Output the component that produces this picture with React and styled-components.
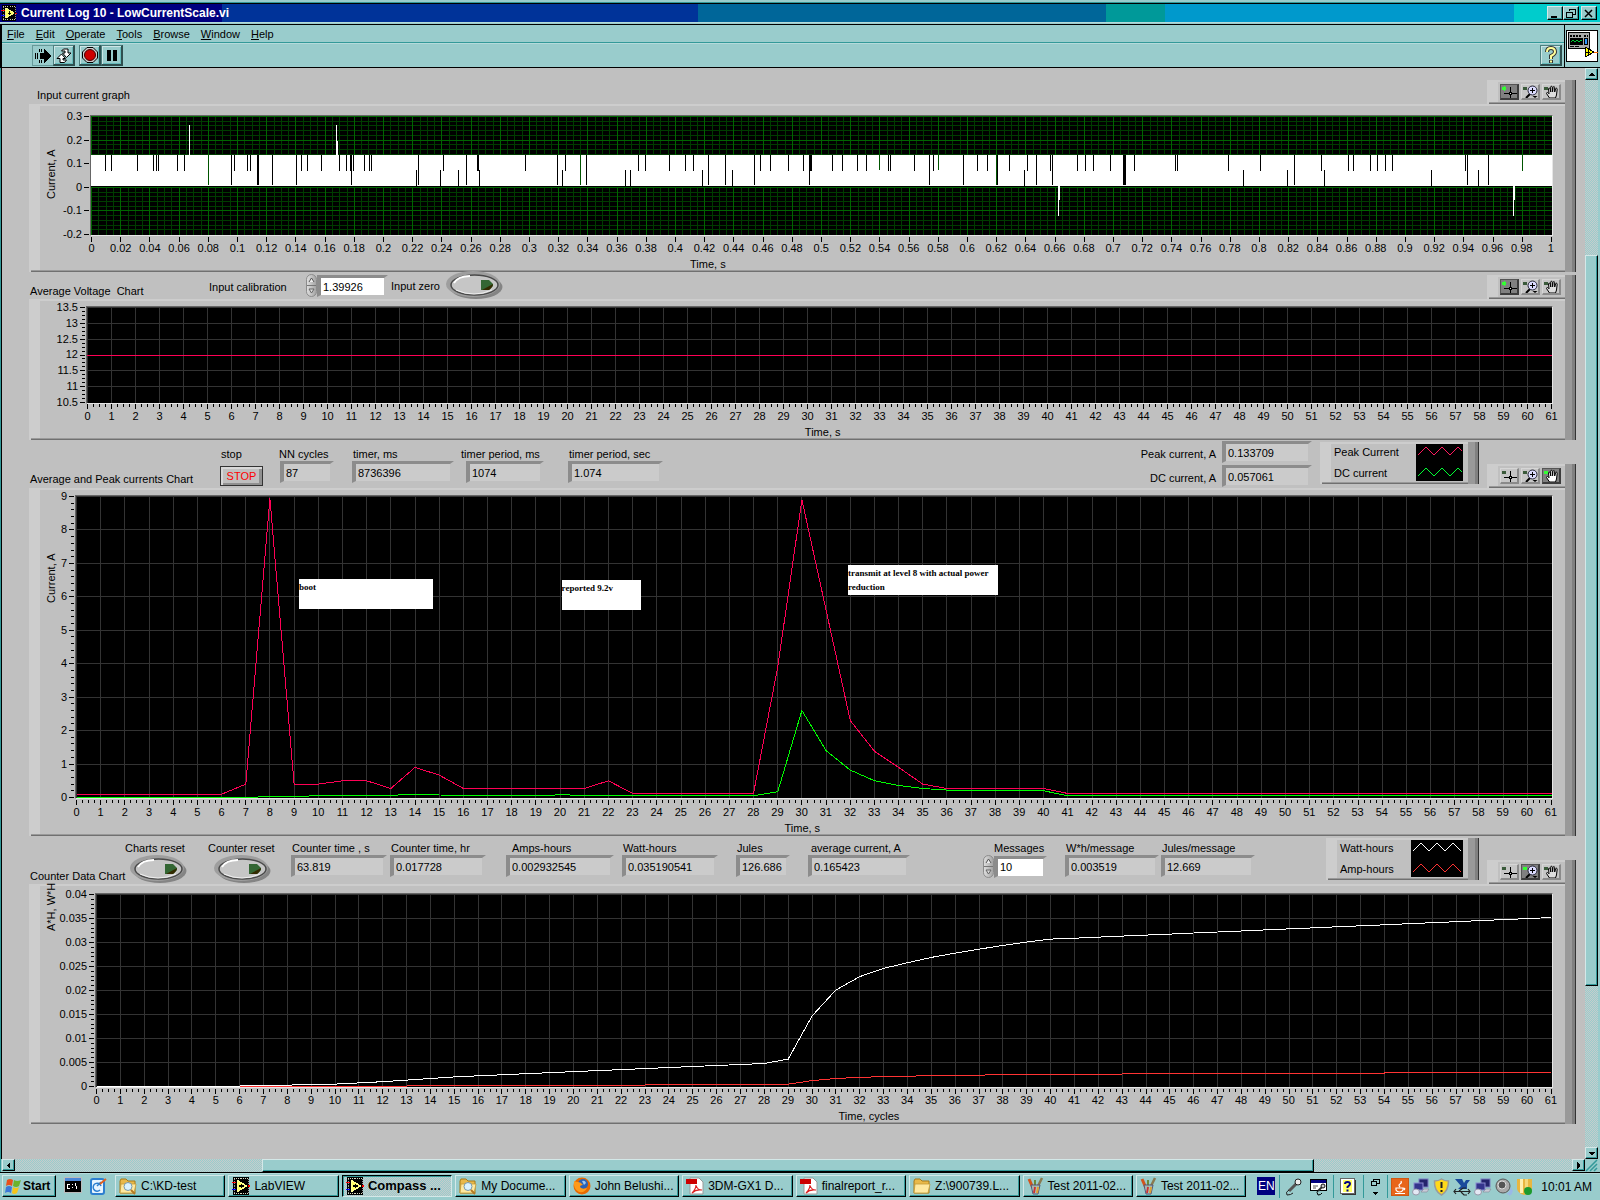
import React from "react";
import styled, { createGlobalStyle, css } from "styled-components";

const C = {
  teal: "#99cccc",
  tealDark: "#339999",
  panel: "#c0c0c0",
  light: "#cdcdcd",
};

const sans = `"Liberation Sans", Arial, sans-serif`;

const Global = createGlobalStyle`
  *, *::before, *::after { box-sizing: border-box; }
  body { margin: 0; background: ${C.teal}; }
  button, input, output { font: inherit; color: inherit; margin: 0; padding: 0; border: 0; background: none; border-radius: 0; }
  svg { display: block; flex: none; }
`;

const Desktop = styled.div`
  display: flex;
  flex-direction: column;
  min-height: 100vh;
  background: ${C.teal};
  color: #000;
  font: 11px/13px ${sans};
`;

/* ---------- window frame ---------- */
const TopEdge = styled.div`
  height: 4px;
  border-top: 2px solid ${C.teal};
  background: linear-gradient(${C.tealDark} 50%, #000 50%);
`;
const TitleBar = styled.header`
  display: flex;
  align-items: center;
  height: 18px;
  padding: 0 3px 0 1px;
  background: linear-gradient(
    to right,
    #000080 0 13.9%,
    #003399 13.9% 43.6%,
    #006699 43.6% 69.1%,
    #009999 69.1% 72.8%,
    #0099cc 72.8% 94.6%,
    #00cccc 94.6%
  );
  color: #fff;
  font: bold 12px/18px ${sans};
`;
const TitleText = styled.h1`
  flex: 1;
  margin: 0 0 0 4px;
  font: inherit;
`;
const raised = css`
  border: 1px solid;
  border-color: #d4e8e8 #000 #000 #d4e8e8;
  box-shadow: inset -1px -1px 0 ${C.tealDark};
  background: ${C.teal};
`;
const CaptionButton = styled.button`
  ${raised}
  display: grid;
  place-items: center;
  width: 16px;
  height: 14px;
  margin-left: ${(p) => (p.$apart ? 2 : 0)}px;
`;
const TitleEdge = styled.div`
  height: 3px;
  background: linear-gradient(#b5dada 0 1px, ${C.teal} 1px 2px, #000 2px 3px);
`;
const Bars = styled.div`
  display: flex;
  height: 43px;
  border-left: 2px solid #000;
  border-bottom: 1px solid #000;
`;
const BarStack = styled.div`
  flex: 1;
  display: flex;
  flex-direction: column;
`;
const MenuBar = styled.nav`
  display: flex;
  align-items: center;
  gap: 11px;
  height: 19px;
  padding: 0 5px;
  border-bottom: 1px solid #b5dada;
  box-shadow: inset 0 -1px 0 ${C.tealDark};
`;
const MenuItem = styled.button`
  &::first-letter { text-decoration: underline; }
`;
const ToolBar = styled.div`
  display: flex;
  flex: 1;
  align-items: center;
  padding: 0 2px 0 30px;
`;
const ToolButton = styled.button`
  display: grid;
  place-items: center;
  width: ${(p) => (p.$flat ? 21 : 22)}px;
  height: 21px;
  margin-left: ${(p) => p.$gap || 0}px;
  border: 1px solid #669999;
  border-right-width: 0;
  ${(p) =>
    !p.$flat &&
    css`
      border: 1px solid #336666;
      border-width: 1px 2px 2px 1px;
      border-color: #4d8080 #2f4f4f #2f4f4f #4d8080;
      box-shadow: inset 1px 1px 0 #cce6e6, inset -1px -1px 0 #66bbbb;
    `}
`;
const Grow = styled.div`
  flex: 1;
`;
const ViIcon = styled.div`
  width: 36px;
  padding: 5px 1px 0;
  border-left: 1px solid #000;
`;

/* ---------- scrolling work area ---------- */
const WorkRow = styled.div`
  display: flex;
  flex: 1;
  border-left: 1px solid ${C.tealDark};
  border-right: 2px solid ${C.teal};
`;
const Front = styled.main`
  flex: 1;
  min-width: 0;
  padding: 0 9px 35px 27px;
  border-left: 1px solid #000;
  background: ${C.panel};
`;
const checker = css`
  background: repeating-conic-gradient(#c6cccc 0 25%, ${C.teal} 0 50%) 0 0 / 2px 2px;
`;
const VBar = styled.div`
  display: flex;
  flex-direction: column;
  width: 13px;
`;
const HBar = styled.div`
  display: flex;
  height: 13px;
  padding: 0 2px 0 1px;
  border-left: 1px solid ${C.tealDark};
`;
const Track = styled.div`
  ${checker}
  flex: ${(p) => p.$part} 1 0;
`;
const Thumb = styled.div`
  ${raised}
  flex: ${(p) => p.$part} 1 0;
`;
const ScrollButton = styled.button`
  ${raised}
  display: grid;
  place-items: center;
  width: 13px;
  height: 12px;
`;

/* ---------- front panel rows ---------- */
const Row = styled.div`
  display: flex;
  align-items: flex-end;
  height: ${(p) => p.$h}px;
  padding-left: ${(p) => p.$left || 1}px;
  white-space: nowrap;
`;
const ChartName = styled.h2`
  width: ${(p) => p.$w}px;
  margin: 0 0 ${(p) => p.$drop}px;
  font: inherit;
  white-space: pre;
`;
const Slot = styled.div`
  width: ${(p) => p.$w}px;
  margin-bottom: ${(p) => p.$drop}px;
`;
const Caption = styled.label`
  display: block;
  padding-left: ${(p) => p.$in || 1}px;
`;
const Indent = styled.div`
  padding-left: ${(p) => p.$in || 0}px;
`;
const FieldBox = styled.input`
  display: block;
  width: ${(p) => p.$w}px;
  height: 22px;
  padding: 0 0 0 2px;
  border: solid transparent;
  border-width: 3px 4px 2px 4px;
  border-top-color: #8c8c8c;
  border-left-color: #8c8c8c;
  background: ${(p) => (p.$white ? "#fff" : "#cbcbcb")};
  background-clip: padding-box;
  font: 11px/16px ${sans};
`;
const StopButton = styled.button`
  width: 43px;
  height: 20px;
  margin-top: 5px;
  border: 1px solid #333;
  box-shadow: inset 2px 2px 0 #d8d8d8, inset -3px -2px 0 #909090;
  color: #f00;
  font: 11px/18px ${sans};
`;
const Spin = styled.div`
  display: flex;
  flex-direction: column;
  width: 11px;
  height: 23px;
  overflow: hidden;
  border: 1px solid #8c8c8c;
  border-radius: 6px;
  background: linear-gradient(to right, #ddd, #a4a4a4);
`;
const SpinButton = styled.button`
  display: grid;
  flex: 1;
  place-items: center;
  & + & { border-top: 1px solid #777; }
`;
const SwitchButton = styled.button`
  display: block;
  width: 57px;
  height: 28px;
`;
const SideRow = styled.div`
  display: flex;
  align-items: center;
`;
const Readouts = styled.div`
  display: grid;
  grid-template-columns: auto auto;
  gap: 2px 6px;
  justify-items: end;
  margin: 0 8px 1px 0;
`;
const ReadoutName = styled.label`
  padding-top: 7px;
`;

/* a raised plate: pale left and top, thick grey right side */
const plate = css`
  background:
    linear-gradient(to right, #999 0 7px, #808080 7px 10px, #333 10px 11px) right top / 11px 100% no-repeat,
    linear-gradient(#999 50%, #707070 50%) 2px bottom / 100% 2px no-repeat,
    linear-gradient(${C.light}, ${C.light}) left top / 11px 100% no-repeat,
    linear-gradient(${C.light}, ${C.light}) left top / 100% 2px no-repeat,
    ${C.panel};
`;
const Palette = styled.div`
  ${plate}
  display: flex;
  gap: 2px;
  width: 89px;
  height: 24px;
  padding: 4px 0 0 13px;
`;
const PaletteButton = styled.button`
  width: 19px;
  height: 16px;
  border: 1px solid;
  border-width: 1px 2px 2px 1px;
  border-color: ${(p) => (p.$on ? "#555 #3c3c3c #3c3c3c #555" : "#d6d6d6 #8a8a8a #8a8a8a #d6d6d6")};
  background: ${(p) => (p.$on ? "#808080" : "#c6c6c6")};
`;
const LegendPlate = styled.div`
  ${plate}
  display: flex;
  justify-content: space-between;
  width: ${(p) => p.$w}px;
  height: 42px;
  margin: 0 8px 4px 0;
  padding: 2px 16px 2px 14px;
`;
const LegendNames = styled.div`
  display: grid;
  align-content: start;
  gap: 8px;
  padding-top: 2px;
`;

/* ---------- charts ---------- */
const ChartPlate = styled.section`
  ${plate}
  display: grid;
  grid-template-columns: 19px ${(p) => p.$axis}px minmax(0, 1fr) 12px;
  padding: ${(p) => p.$top}px 11px 1px 11px;
`;
const AxisName = styled.div`
  height: ${(p) => p.$tall || 60}px;
  margin: ${(p) => p.$down}px 0 0 5px;
  writing-mode: vertical-rl;
  transform: rotate(180deg);
  white-space: nowrap;
`;
const YAxis = styled.div`
  display: flex;
  justify-content: flex-end;
  gap: 2px;
  padding: 1px 1px 1px 0;
  height: ${(p) => p.$h}px;
`;
const YNames = styled.div`
  display: flex;
  flex-direction: column;
  justify-content: space-between;
  align-items: flex-end;
`;
const YName = styled.span`
  display: flex;
  align-items: center;
  height: 1px;
`;
const Plot = styled.div`
  position: relative;
  height: ${(p) => p.$h}px;
  border: 1px solid;
  border-color: #666 #e6e6e6 #e6e6e6 #666;
  background: #000;
`;
const XAxis = styled.div`
  grid-column: 3;
  padding: ${(p) => p.$gap}px 1px 0 1px;
`;
const XNames = styled.div`
  display: flex;
  justify-content: space-between;
  padding-top: ${(p) => p.$gap}px;
`;
const XName = styled.span`
  display: flex;
  justify-content: center;
  width: 1px;
`;
const XTitle = styled.div`
  margin: 3px 0 0 ${(p) => p.$at}%;
`;
const Note = styled.div`
  position: absolute;
  left: ${(p) => p.$x}%;
  top: ${(p) => p.$y}px;
  width: ${(p) => p.$w}px;
  height: 30px;
  padding-top: 1px;
  background: #fff;
  font: bold 9px/14px "Liberation Serif", serif;
`;

const range = (n) => Array.from({ length: n }, (_, i) => i);

const Drawing = ({ w, h, children, label }) => (
  <svg
    width="100%"
    height={h}
    viewBox={`0 0 ${w} ${h}`}
    preserveAspectRatio="none"
    shapeRendering="crispEdges"
    role={label ? "img" : undefined}
    aria-label={label}
  >
    {children}
  </svg>
);

function Chart({ label, axis, top, w, h, yNames, yMinor = 1, xNames, xMinor = 1, tickGap, nameGap = 0, xTitle, titleAt, yTitle, yDown = 0, yTall, children, notes }) {
  const xs = (xNames.length - 1) * xMinor;
  const ys = (yNames.length - 1) * yMinor;
  return (
    <ChartPlate $axis={axis} $top={top}>
      <AxisName $down={yDown} $tall={yTall}>{yTitle}</AxisName>
      <YAxis $h={h + 2}>
        <YNames>
          {yNames.map((n) => <YName key={n}>{n}</YName>)}
        </YNames>
        <svg width="5" height={h} shapeRendering="crispEdges">
          {range(ys + 1).map((i) => (
            <rect key={i} x={i % yMinor ? 2 : 0} y={Math.round((i * (h - 1)) / ys)} width="5" height="1" />
          ))}
        </svg>
      </YAxis>
      <Plot $h={h + 2}>
        <Drawing w={w} h={h} label={label}>{children}</Drawing>
        {notes}
      </Plot>
      <XAxis $gap={tickGap}>
        <Drawing w={w} h={5}>
          {range(xs + 1).map((i) => (
            <rect key={i} x={Math.round((i * (w - 1)) / xs)} y="0" width="1" height={i % xMinor ? 3 : 5} />
          ))}
        </Drawing>
        <XNames $gap={nameGap}>
          {xNames.map((n) => <XName key={n}>{n}</XName>)}
        </XNames>
        <XTitle $at={titleAt}>{xTitle}</XTitle>
      </XAxis>
    </ChartPlate>
  );
}

const Grid = ({ w, h, nx, ny, color }) => (
  <g fill={color}>
    {range(nx).map((i) => <rect key={`x${i}`} x={Math.round((i * (w - 1)) / nx)} y="0" width="1" height={h} />)}
    {range(ny).map((i) => <rect key={`y${i}`} x="0" y={Math.round((i * (h - 1)) / ny)} width={w} height="1" />)}
  </g>
);

const Trace = ({ w, h, max, data, color }) => (
  <polyline
    fill="none"
    stroke={color}
    strokeWidth="1"
    points={data.map((v, i) => `${(0.5 + (i * (w - 1)) / 61).toFixed(1)},${(h - 0.5 - (v / max) * (h - 1)).toFixed(1)}`).join(" ")}
  />
);

/* dropouts in the sampled current, in plot pixels from the left edge */
const shift = (list) => list.map((x) => x - 91);
const upperGaps = shift([105, 111, 137, 153, 156, 158, 177, 184, 234, 247, 250, 301, 307, 321, 339, 346, 350, 353, 364, 369, 371, 443, 477, 478, 525, 565, 638, 645, 669, 685, 693, 760, 770, 788, 803, 810, 811, 832, 842, 857, 866, 888, 890, 914, 933, 977, 987, 1009, 1027, 1050, 1077, 1085, 1093, 1110, 1134, 1175, 1177, 1228, 1260, 1321, 1348, 1353, 1370, 1377, 1385, 1392, 1465]);
const fullGaps = shift([231, 257, 258, 272, 296, 351, 418, 466, 557, 586, 708, 725, 754, 809, 929, 963, 997, 1036, 1052, 1123, 1124, 1125, 1294, 1467, 1488]);
const lowerGaps = shift([416, 440, 458, 479, 562, 625, 630, 702, 732, 1024, 1243, 1287, 1324, 1431, 1478]);

const fill = (pairs) => {
  const out = [];
  pairs.forEach(([x, v], k) => {
    if (k === 0) return out.push(v);
    const [px, pv] = pairs[k - 1];
    for (let i = px + 1; i <= x; i++) out.push(pv + ((v - pv) * (i - px)) / (x - px));
  });
  return out;
};
const peak = fill([[0, 0.1], [6, 0.1], [7, 0.4], [8, 8.95], [9, 0.4], [10, 0.4], [11, 0.5], [12, 0.5], [13, 0.27], [14, 0.9], [15, 0.67], [16, 0.27], [21, 0.27], [22, 0.5], [23, 0.12], [28, 0.12], [29, 3.9], [30, 8.9], [31, 5.6], [32, 2.3], [33, 1.38], [34, 0.9], [35, 0.4], [36, 0.27], [40, 0.27], [41, 0.12], [61, 0.12]]);
const dc = fill([[0, 0], [7, 0], [8, 0.03], [14, 0.08], [19, 0.05], [20, 0.08], [22, 0.05], [28, 0.05], [29, 0.17], [30, 2.6], [31, 1.4], [32, 0.82], [33, 0.5], [34, 0.36], [35, 0.27], [36, 0.22], [40, 0.2], [41, 0.05], [61, 0.05]]);
const watt = fill([[0, 0.0001], [6, 0.0001], [8, 0.0003], [10, 0.0005], [12, 0.001], [15, 0.002], [20, 0.0031], [28, 0.0048], [29, 0.0057], [30, 0.0147], [31, 0.0201], [32, 0.0229], [33, 0.0246], [34, 0.0258], [35, 0.0269], [36, 0.0278], [37, 0.0286], [38, 0.0294], [39, 0.0301], [40, 0.0307], [41, 0.0309], [61, 0.0352]]);
const amp = watt.map((v) => v / 12);

const sixtyOne = range(62).map(String);
const hundredths = range(51).map((i) => String(i / 50));

/* ---------- icons ---------- */
const LabViewIcon = ({ size = 17 }) => (
  <svg width={size} height={size} viewBox="0 0 17 17" shapeRendering="crispEdges">
    <rect x="1" width="15" height="17" fill="#000" />
    <path d="M2 1.5h14M2 15.5h14" stroke="#d8d8c0" strokeDasharray="1 1" />
    <path d="M2.5 2v13M15.5 2v13" stroke="#999" strokeDasharray="1 1" />
    <path d="M5 3l9 5.5-9 5.5z" fill="#ffff66" stroke="#ffff99" />
    <path d="M7 8.5h4M9 6.5v4" stroke="#000" />
    <path d="M0 5.5h4M15 8.5h2" stroke="#f00" />
    <path d="M0 11.5h4" stroke="#00f" />
  </svg>
);
const CrossIcon = ({ on }) => (
  <svg width="16" height="13" viewBox="0 0 16 13" shapeRendering="crispEdges">
    <rect x="1" y="2" width="4" height="3" fill={on ? "#3f3" : "#3a5a3a"} />
    {on && <path d="M3.500 1v5" stroke="#3f3" />}
    <path d="M3 8.500h13M9.500 2v11" stroke="#000" />
    <rect x="8.500" y="7.500" width="2" height="2" fill="#ddd" stroke="#000" />
  </svg>
);
const LensIcon = ({ on }) => (
  <svg width="16" height="13" viewBox="0 0 16 13">
    <rect x="1" y="2" width="4" height="3" fill={on ? "#3f3" : "#3a5a3a"} />
    <path d="M8 9l-4 4" stroke="#000" strokeWidth="2" />
    <circle cx="10.500" cy="5.500" r="4.500" fill="#dcdcff" stroke="#223" />
    <path d="M8 5.500h5M10.500 3v5" stroke="#000" />
    <path d="M10.500 11h5l-2.500 2z" fill="#000" />
  </svg>
);
const HandIcon = ({ on }) => (
  <svg width="16" height="13" viewBox="0 0 16 13">
    <rect x="1" y="2" width="4" height="3" fill={on ? "#3f3" : "#3a5a3a"} />
    <path d="M6.500 13L3.500 8.500c0-1.500 1.500-1.200 2.500.3L5.500 4c0-1.200 1.500-1.200 1.700 0l.6 3-.2-4.800c0-1.200 1.700-1.200 1.700 0l.3 4.600.4-4.500c.2-1 1.600-1 1.600.1L11.700 7l.9-3.200c.3-1 1.600-.7 1.600.3L13.500 10l-1 3z" fill={on ? "#fff" : "#ddd"} stroke="#000" />
  </svg>
);
const Tools = ({ active }) => (
  <Palette role="group" aria-label="Graph palette">
    <PaletteButton $on={active === 0} aria-label="Cursor"><CrossIcon on={active === 0} /></PaletteButton>
    <PaletteButton $on={active === 1} aria-label="Zoom"><LensIcon on={active === 1} /></PaletteButton>
    <PaletteButton $on={active === 2} aria-label="Pan"><HandIcon on={active === 2} /></PaletteButton>
  </Palette>
);
const Zigzags = ({ w, a, b }) => (
  <svg width={w} height="37" viewBox={`0 0 ${w} 37`} shapeRendering="crispEdges">
    <rect width={w} height="37" fill="#000" />
    <path d={`M2 11l8-8 8 8 8-8 8 8 8-8 ${w > 50 ? "8 8" : "4 4"}`} fill="none" stroke={a} />
    <path d={`M2 32l8-8 8 8 8-8 8 8 8-8 ${w > 50 ? "8 8" : "4 4"}`} fill="none" stroke={b} />
  </svg>
);
const Legend = ({ w, swatch, names, colors }) => (
  <LegendPlate $w={w}>
    <LegendNames>{names.map((n) => <span key={n}>{n}</span>)}</LegendNames>
    <Zigzags w={swatch} a={colors[0]} b={colors[1]} />
  </LegendPlate>
);
const Switch = ({ id }) => (
  <SwitchButton id={id} aria-pressed="false">
    <svg width="57" height="28" viewBox="0 0 57 28">
      <ellipse cx="30" cy="16" rx="26.500" ry="12" fill="#848484" />
      <ellipse cx="27" cy="13" rx="27" ry="13" fill="#9e9e9e" />
      <ellipse cx="28.500" cy="14" rx="23.500" ry="10" fill="#c6c6c6" stroke="#4a4a4a" strokeWidth="1.500" />
      <path d="M8 12q4-7 16-7" fill="none" stroke="#fff" strokeWidth="2" />
      <path d="M10 19q18 8 36 0" fill="none" stroke="#eee" />
      <path d="M35 9h8l4 4v2l-4 4h-8z" fill="#336633" />
      <path d="M36 19l11-6q0 3-4 6z" fill="#332b00" />
    </svg>
  </SwitchButton>
);
const Spinner = () => (
  <Spin>
    <SpinButton aria-label="Increase"><svg width="7" height="6"><path d="M1 5l2.500-4 2.500 4" fill="#eee" stroke="#555" /></svg></SpinButton>
    <SpinButton aria-label="Decrease"><svg width="7" height="6"><path d="M1 1h5L3.500 5z" fill="#ddd" stroke="#666" /></svg></SpinButton>
  </Spin>
);
const Arrow = ({ d }) => <svg width="7" height="7" viewBox="0 0 7 7" shapeRendering="crispEdges"><path d={d} /></svg>;

const Readout = ({ id, name, value, w, slot, lead, indent, drop }) => (
  <Slot $w={slot} $drop={drop}>
    <Caption htmlFor={id} $in={lead}>{name}</Caption>
    <Indent $in={indent}><FieldBox id={id} $w={w} defaultValue={value} readOnly /></Indent>
  </Slot>
);

/* ---------- taskbar ---------- */
const TaskBar = styled.footer`
  display: flex;
  align-items: flex-start;
  height: 28px;
  padding: 2px 2px 0;
  border-top: 1px solid #000;
  box-shadow: inset 0 1px 0 #b5dada;
  font: 12px/20px ${sans};
  white-space: nowrap;
`;
const StartButton = styled.button`
  ${raised}
  display: flex;
  align-items: center;
  gap: 1px;
  width: 54px;
  height: 22px;
  padding-left: 1px;
  font: bold 12px/20px ${sans};
`;
const Launch = styled.div`
  display: flex;
  gap: 7px;
  width: 59px;
  padding: 2px 0 0 8px;
`;
const Tasks = styled.div`
  display: flex;
  flex: 1;
  gap: 3px;
  min-width: 0;
  margin-right: 11px;
`;
const Task = styled.button`
  ${raised}
  display: flex;
  flex: 1 1 0;
  align-items: center;
  gap: 4px;
  min-width: 0;
  height: 22px;
  padding-left: 3px;
  ${(p) =>
    p.$on &&
    css`
      ${checker}
      border-color: #000 #d4e8e8 #d4e8e8 #000;
      box-shadow: inset 1px 1px 0 ${C.tealDark};
      font: bold 13px/20px ${sans};
    `}
`;
const Lang = styled.span`
  width: 18px;
  height: 18px;
  margin: 2px 4px 0 0;
  background: #000080;
  color: #fff;
  line-height: 18px;
  text-align: center;
`;
const TrayGroup = styled.div`
  display: flex;
  align-items: center;
  gap: ${(p) => p.$gap || 0}px;
  height: 23px;
  padding: 0 ${(p) => p.$pad}px;
  border-left: 1px solid ${C.tealDark};
`;
const Clock = styled.time`
  margin: 0 3px 0 5px;
`;

const FolderIcon = ({ find }) => (
  <svg width="18" height="17" viewBox="0 0 18 17">
    <path d="M1 3l1-2h5l2 2h7v12H1z" fill="#e9b949" stroke="#a77b1a" />
    <path d="M2 6h15l-2 9H1z" fill="#ffe9a0" stroke="#c39a35" strokeWidth=".8" />
    {find && <><circle cx="9" cy="8.500" r="4" fill="#d9f3ff" stroke="#7a98a8" /><path d="M12 12l4 4" stroke="#b37a22" strokeWidth="2" /></>}
  </svg>
);
const FoxIcon = () => (
  <svg width="18" height="18" viewBox="0 0 18 18">
    <circle cx="9" cy="9" r="8.500" fill="#e66a00" />
    <circle cx="10" cy="7" r="5" fill="#2a62b8" />
    <path d="M1 4q2 1 4 1 3 0 5 3-3 0-3 2 2 3 7 1-2 5-8 4-6-3-5-11z" fill="#ff9a1a" />
    <path d="M9 4q3-1 4 2l-2 2z" fill="#9cc8f0" />
  </svg>
);
const PdfIcon = () => (
  <svg width="18" height="18" viewBox="0 0 18 18">
    <path d="M4 1h9l4 4v12H4z" fill="#fff" stroke="#999" />
    <path d="M0 2h11v5H0z" fill="#cc0000" />
    <path d="M6 16q4-4 4-8 1 5 6 5-6-1-10 3z" fill="none" stroke="#d22" strokeWidth="1.200" />
  </svg>
);
const BrushIcon = () => (
  <svg width="17" height="18" viewBox="0 0 17 18">
    <path d="M6 11L2 2" stroke="#d2541c" strokeWidth="3" />
    <path d="M8 11V3" stroke="#6a8a3a" strokeWidth="2" />
    <path d="M10 11l5-10" stroke="#8a7a50" strokeWidth="2.500" />
    <path d="M4 8h9l-2 9H6z" fill="#a9cccc" fillOpacity=".8" stroke="#557" />
    <path d="M7 16l1-6" stroke="#c33" strokeWidth="2" />
    <path d="M10 16l1-6" stroke="#e0a030" strokeWidth="2" />
  </svg>
);
const FlagIcon = () => (
  <svg width="18" height="17" viewBox="0 0 18 17">
    <path d="M3 2q3-2 6 0L8 8Q5 6 2 8z" fill="#e8501c" />
    <path d="M10 2q3 2 7 0l-2 6q-3 2-6 0z" fill="#6cb32b" />
    <path d="M2 9q3-2 6 0l-1 6q-3-2-6 0z" fill="#3c78d8" />
    <path d="M9 9q3 2 6 0l-2 6q-3 2-5 0z" fill="#f5c518" />
  </svg>
);
const ConsoleIcon = () => (
  <svg width="18" height="16" viewBox="0 0 18 16" shapeRendering="crispEdges">
    <rect width="18" height="16" fill="#bbb" /><rect x="1" y="1" width="16" height="3" fill="#4a86d8" /><rect x="1" y="4" width="16" height="11" />
    <path d="M6 7H3v4h3M8.500 7v1M8.500 10v1M11 6l2 6" fill="none" stroke="#fff" />
  </svg>
);
const NoteIcon = () => (
  <svg width="18" height="18" viewBox="0 0 18 18">
    <rect x="2" y="2" width="13" height="15" rx="2" fill="#e8f4ff" stroke="#2d7fd0" strokeWidth="2" />
    <path d="M12 9a4 4 0 1 0-1 4M8 9l4-4" fill="none" stroke="#2d7fd0" strokeWidth="1.500" />
    <path d="M11 7l6-5" stroke="#e06020" strokeWidth="2" />
  </svg>
);
const MicIcon = () => (
  <svg width="18" height="18" viewBox="0 0 18 18">
    <path d="M4 13l7-7" stroke="#555" strokeWidth="3" /><circle cx="13" cy="4" r="3" fill="#eee" stroke="#222" />
    <path d="M4 12q-4 2-2 5 4 0 6-2" fill="none" stroke="#222" />
  </svg>
);
const MicWindowIcon = () => (
  <svg width="18" height="18" viewBox="0 0 18 18">
    <rect x=".5" y="1.500" width="16" height="11" fill="#fff" stroke="#000" /><rect x="1" y="2" width="15" height="3" fill="#000080" />
    <path d="M3 8h5M3 10h3" stroke="#555" /><path d="M8 13l4-4" stroke="#333" strokeWidth="2" /><circle cx="13" cy="8" r="2" fill="#ccc" stroke="#111" />
    <path d="M8 12q-2 2 0 5 3 0 4-2" fill="none" stroke="#000" />
  </svg>
);
const QuestionIcon = ({ page }) => (
  <svg width="17" height="18" viewBox="0 0 17 18">
    {page && <><rect x="2" y="2" width="14" height="15" fill="#333" /><rect x=".5" y=".5" width="14" height="15" fill="#fff" stroke="#666" /><rect x="3" y="2" width="9" height="12" fill="#ff6" /></>}
    <path d={page ? "M5 6q0-2 2.500-2T10 6q0 1-2.500 3v1M7.500 11.500v2" : "M5 6q0-4 4-4t4 4q0 2-4 4v3M9 14v3"} fill="none" stroke={page ? "#000080" : "#333"} strokeWidth={page ? 2 : 4} />
    {!page && <path d="M5 6q0-4 4-4t4 4q0 2-4 4v3M9 14.500v2" fill="none" stroke="#ffff99" strokeWidth="2" />}
  </svg>
);
const JavaIcon = () => (
  <svg width="18" height="18" viewBox="0 0 18 18">
    <rect width="18" height="18" rx="1" fill="#e8651a" stroke="#b84a0c" />
    <path d="M5 10h7v2q-1 2-3.500 2T5 12zM12 10q3 0 1 2M4 15.500h10M9 9q-2-2 0-3t1-3" fill="none" stroke="#fff" strokeWidth="1.200" />
  </svg>
);
const NetIcon = () => (
  <svg width="18" height="18" viewBox="0 0 18 18">
    <rect x="7" y="1" width="9" height="8" fill="#24246c" stroke="#7a7ac0" /><rect x="2" y="5" width="9" height="7" fill="#34348c" stroke="#8a8ad0" />
    <ellipse cx="4" cy="14" rx="3.500" ry="3" fill="#e4e8f4" stroke="#99a" /><path d="M9 14h6l2-3h-5z" fill="#c8ccd8" stroke="#889" strokeWidth=".6" />
  </svg>
);
const ShieldIcon = () => (
  <svg width="17" height="18" viewBox="0 0 17 18">
    <path d="M8.500 1q3 2 7 2 0 10-7 14Q1 13 1.500 3q4 0 7-2z" fill="#ffd91a" stroke="#9a9a9a" strokeWidth="1.500" /><path d="M8.500 4v6M8.500 12v2" stroke="#222" strokeWidth="2" />
  </svg>
);
const BirdIcon = () => (
  <svg width="18" height="18" viewBox="0 0 18 18">
    <path d="M2 1h7l2 4 2-3h4l-3 4v5H5l3-3z" fill="#1a4a9c" /><path d="M1 13.500h16M3 11l-2 2.500L3 16M15 11l2 2.500L15 16M6 13l4-3h3M8 14l3 3h3" fill="none" stroke="#222" strokeWidth="1.200" />
  </svg>
);
const SpeakerIcon = () => (
  <svg width="18" height="18" viewBox="0 0 18 18">
    <circle cx="8" cy="8" r="7" fill="#aaa" stroke="#555" /><circle cx="7" cy="7" r="4" fill="#555" stroke="#ddd" /><path d="M12 16q4-1 4-6M14 17q3-1 3-5" fill="none" stroke="#9ab8e8" strokeWidth="1.500" />
  </svg>
);
const BoxIcon = () => (
  <svg width="17" height="18" viewBox="0 0 17 18">
    <path d="M1 1h15v10q-1 5-8 6-6-2-7-6z" fill="#e8b640" /><path d="M4 1h3v14H4z" fill="#fff0b0" /><path d="M9 1h3v10H9z" fill="#f7d878" /><circle cx="12" cy="13" r="4" fill="#1c9a2c" />
  </svg>
);

const tasks = [
  ["C:\\KD-test", <FolderIcon find />],
  ["LabVIEW", <LabViewIcon size={18} />],
  ["Compass ...", <LabViewIcon size={18} />, true],
  ["My Docume...", <FolderIcon find />],
  ["John Belushi...", <FoxIcon />],
  ["3DM-GX1 D...", <PdfIcon />],
  ["finalreport_r...", <PdfIcon />],
  ["Z:\\900739.L...", <FolderIcon />],
  ["Test 2011-02...", <BrushIcon />],
  ["Test 2011-02...", <BrushIcon />],
];

export default function App() {
  return (
    <Desktop>
      <Global />
      <TopEdge />
      <TitleBar>
        <LabViewIcon size={16} />
        <TitleText>Current Log 10 - LowCurrentScale.vi</TitleText>
        <CaptionButton aria-label="Minimize"><svg width="10" height="9"><path d="M1 7h6v2H1z" /></svg></CaptionButton>
        <CaptionButton aria-label="Restore">
          <svg width="10" height="10" shapeRendering="crispEdges"><path d="M3.500 3V1h6v5H7M3 1.500h6M.5 4v5h6V4zM0 4.500h7" fill="none" stroke="#000" /></svg>
        </CaptionButton>
        <CaptionButton $apart aria-label="Close"><svg width="10" height="9"><path d="M1 1l7 7M8 1L1 8" stroke="#000" strokeWidth="1.500" /></svg></CaptionButton>
      </TitleBar>
      <TitleEdge />
      <Bars>
        <BarStack>
          <MenuBar>
            {["File", "Edit", "Operate", "Tools", "Browse", "Window", "Help"].map((m) => <MenuItem key={m}>{m}</MenuItem>)}
          </MenuBar>
          <ToolBar>
            <ToolButton $flat aria-label="Run">
              <svg width="16" height="14" shapeRendering="crispEdges"><path d="M5 4h4V0l7 7-7 7v-4H5z" /><path d="M.5 4v6M2.500 4v6M4.500 0v3M6.500 0v3M4.500 11v3M6.500 11v3" stroke="#000" /></svg>
            </ToolButton>
            <ToolButton aria-label="Run continuously">
              <svg width="16" height="15" viewBox="0 0 16 15"><path d="M5.500 3l2-2H12v4h3l-4.500 4.500L6.500 5H9V3zM10.500 12l-2 2.500H4v-4H1L5.500 6l4 4.500H7V12z" fill="#fff" stroke="#000" /></svg>
            </ToolButton>
            <ToolButton $gap={4} aria-label="Abort">
              <svg width="16" height="16" viewBox="0 0 16 16"><path d="M5 .5h6L15.500 5v6L11 15.500H5L.5 11V5z" fill="#ccc" stroke="#000" /><circle cx="8" cy="8" r="5.500" fill="#c00" stroke="#400" /></svg>
            </ToolButton>
            <ToolButton aria-label="Pause"><svg width="12" height="11"><path d="M1 0h4v11H1zM7 0h4v11H7z" /></svg></ToolButton>
            <Grow />
            <ToolButton aria-label="Help"><QuestionIcon /></ToolButton>
          </ToolBar>
        </BarStack>
        <ViIcon>
          <svg width="32" height="32" viewBox="0 0 32 32" shapeRendering="crispEdges">
            <rect x=".5" y=".5" width="31" height="31" fill="#fff" stroke="#000" />
            <rect x="2.500" y="2.500" width="21" height="16" fill="#aaa" stroke="#000" />
            <path d="M4 5.500h11M18 5.500h4" stroke="#000" strokeWidth="2" strokeDasharray="2 1" />
            <rect x="4" y="8" width="13" height="7" /><path d="M5 12l2-2 2 2 2-2 2 2 2-2 1 1" fill="none" stroke="#0c3" />
            <rect x="18.500" y="8.500" width="3" height="6" fill="#39f" stroke="#000" /><path d="M4 16.500h9" stroke="#000" strokeDasharray="4 1" />
            <path d="M19 17v10l9-5z" fill="#ff0" stroke="#000" /><path d="M20 22h4M22 20v4" stroke="#000" /><path d="M28 22h4" stroke="#f60" />
          </svg>
        </ViIcon>
      </Bars>

      <WorkRow>
        <Front>
          <Row $h={36} $left={8}>
            <ChartName $drop={2}>Input current graph</ChartName>
            <Grow />
            <Tools active={0} />
          </Row>
          <Chart
            label="Input current" axis={31} top={11} w={1461} h={119} tickGap={1}
            yNames={["0.3", "0.2", "0.1", "0", "-0.1", "-0.2"]} xNames={hundredths}
            xTitle="Time, s" titleAt={41} yTitle="Current, A" yDown={24}
          >
            <Grid w={1461} h={119} nx={200} ny={25} color="#003c00" />
            <Grid w={1461} h={119} nx={50} ny={5} color="#006600" />
            <rect x="0" y="39" width="1461" height="31" fill="#fff" />
            <g fill="#000">
              <rect x="0" y="70" width="1461" height="1" />
              {upperGaps.map((x) => <rect key={x} x={x} y="39" width="1" height="16" />)}
              {fullGaps.map((x) => <rect key={x} x={x} y="39" width="1" height="30" />)}
              {lowerGaps.map((x) => <rect key={x} x={x} y="54" width="1" height="16" />)}
            </g>
            <path d="M117.500 39v30M489.500 39v30M905.500 39v30M788.500 39v15M847.500 39v15M1431.500 39v16" stroke="#005500" />
            <path d="M98.500 9v30M245.500 9v30M246.500 25v14M967.500 70v30M968.500 70v14M1422.500 70v30M1423.500 70v14" stroke="#fff" />
          </Chart>

          <Row $h={27}>
            <ChartName $w={179} $drop={1}>Average Voltage  Chart</ChartName>
            <Slot $w={97} $drop={5}><label htmlFor="calibration">Input calibration</label></Slot>
            <Slot $w={11} $drop={2}><Spinner /></Slot>
            <Slot $w={74} $drop={2}><FieldBox id="calibration" $w={71} $white defaultValue="1.39926" /></Slot>
            <Slot $w={55} $drop={6}><label htmlFor="zero">Input zero</label></Slot>
            <Switch id="zero" />
            <Grow />
            <Tools active={0} />
          </Row>
          <Chart
            label="Average voltage" axis={27} top={7} w={1465} h={96} tickGap={0} nameGap={1}
            yNames={["13.5", "13", "12.5", "12", "11.5", "11", "10.5"]} yMinor={4} xNames={sixtyOne} xMinor={4}
            xTitle="Time, s" titleAt={49}
          >
            <Grid w={1465} h={96} nx={61} ny={6} color="#333" />
            <rect x="0" y="48" width="1465" height="1" fill="#ff0055" />
          </Chart>

          <Row $h={48}>
            <ChartName $w={190} $drop={2}>Average and Peak currents Chart</ChartName>
            <Slot $w={58} $drop={2}>
              <Caption htmlFor="stop">stop</Caption>
              <StopButton id="stop">STOP</StopButton>
            </Slot>
            <Readout id="nn" name="NN cycles" value="87" w={54} slot={74} indent={2} drop={5} />
            <Readout id="timer" name="timer, ms" value="8736396" w={102} slot={108} drop={5} />
            <Readout id="tpms" name="timer period, ms" value="1074" w={78} slot={108} indent={6} drop={5} />
            <Readout id="tpsec" name="timer period, sec" value="1.074" w={95} slot={100} drop={5} />
            <Grow />
            <Readouts>
              <ReadoutName htmlFor="peak">Peak current, A</ReadoutName>
              <FieldBox id="peak" $w={90} defaultValue="0.133709" readOnly />
              <ReadoutName htmlFor="dc">DC current, A</ReadoutName>
              <FieldBox id="dc" $w={90} defaultValue="0.057061" readOnly />
            </Readouts>
            <Legend w={159} swatch={47} names={["Peak Current", "DC current"]} colors={["#ff1a5e", "#00ff33"]} />
            <Tools active={2} />
          </Row>
          <Chart
            label="Average and peak currents" axis={16} top={7} w={1476} h={302} tickGap={1} nameGap={1}
            yNames={["9", "8", "7", "6", "5", "4", "3", "2", "1", "0"]} yMinor={5} xNames={sixtyOne} xMinor={4}
            xTitle="Time, s" titleAt={48} yTitle="Current, A" yDown={48}
            notes={
              <>
                <Note $x={15.1} $y={83} $w={134}>boot</Note>
                <Note $x={32.9} $y={84} $w={79}>reported 9.2v</Note>
                <Note $x={52.3} $y={69} $w={150}>transmit at level 8 with actual power reduction</Note>
              </>
            }
          >
            <Grid w={1476} h={302} nx={61} ny={9} color="#333" />
            <Trace w={1476} h={302} max={9} data={peak} color="#ff0055" />
            <Trace w={1476} h={302} max={9} data={dc} color="#00ff00" />
          </Chart>

          <Row $h={48}>
            <ChartName $w={94} $drop={1}>Counter Data Chart</ChartName>
            <Slot $w={83} $drop={1}><Caption htmlFor="charts">Charts reset</Caption><Indent $in={6}><Switch id="charts" /></Indent></Slot>
            <Slot $w={84} $drop={1}><Caption htmlFor="counter">Counter reset</Caption><Indent $in={7}><Switch id="counter" /></Indent></Slot>
            <Readout id="cts" name="Counter time , s" value="63.819" w={96} slot={99} drop={7} />
            <Readout id="cth" name="Counter time, hr" value="0.017728" w={96} slot={116} drop={7} />
            <Readout id="ah" name="Amps-hours" value="0.002932545" w={108} slot={116} lead={6} drop={7} />
            <Readout id="wh" name="Watt-hours" value="0.035190541" w={96} slot={114} drop={7} />
            <Readout id="j" name="Jules" value="126.686" w={54} slot={72} drop={7} />
            <Readout id="avg" name="average current, A" value="0.165423" w={102} slot={175} lead={3} drop={7} />
            <Slot $w={82} $drop={6}>
              <Caption htmlFor="msgs" $in={11}>Messages</Caption>
              <SideRow><Spinner /><FieldBox id="msgs" $w={53} $white defaultValue="10" /></SideRow>
            </Slot>
            <Readout id="whm" name="W*h/message" value="0.003519" w={94} slot={96} drop={7} />
            <Readout id="jm" name="Jules/message" value="12.669" w={94} slot={96} drop={7} />
            <Grow />
            <Legend w={153} swatch={52} names={["Watt-hours", "Amp-hours"]} colors={["#ffffff", "#ff3333"]} />
            <Tools active={1} />
          </Row>
          <Chart
            label="Counter data" axis={36} top={9} w={1456} h={193} tickGap={1}
            yNames={["0.04", "0.035", "0.03", "0.025", "0.02", "0.015", "0.01", "0.005", "0"]} yMinor={5} xNames={sixtyOne} xMinor={4}
            xTitle="Time, cycles" titleAt={51} yTitle="A*H, W*H" yDown={-12} yTall={50}
          >
            <Grid w={1456} h={193} nx={61} ny={8} color="#333" />
            <Trace w={1456} h={193} max={0.04} data={amp} color="#ff3333" />
            <Trace w={1456} h={193} max={0.04} data={watt} color="#ffffff" />
          </Chart>
        </Front>
        <VBar>
          <ScrollButton aria-label="Scroll up"><Arrow d="M3 2h1l3 3H0z" /></ScrollButton>
          <Track $part={175} />
          <Thumb $part={731} />
          <Track $part={161} />
          <ScrollButton aria-label="Scroll down"><Arrow d="M0 2h7L4 5H3z" /></ScrollButton>
        </VBar>
      </WorkRow>
      <HBar>
        <ScrollButton aria-label="Scroll left"><Arrow d="M5 0v7L2 4V3z" /></ScrollButton>
        <Track $part={247} />
        <Thumb $part={1052} />
        <Track $part={259} />
        <ScrollButton aria-label="Scroll right"><Arrow d="M2 0v7l3-3V3z" /></ScrollButton>
        <svg width="13" height="13"><path d="M1 12L12 1M5 12l7-7M9 12l3-3" stroke="#339999" strokeWidth="1.500" /></svg>
      </HBar>

      <TaskBar>
        <StartButton><FlagIcon />Start</StartButton>
        <Launch><ConsoleIcon /><NoteIcon /></Launch>
        <Tasks>
          {tasks.map(([name, icon, on], i) => <Task key={i} $on={on}>{icon}{name}</Task>)}
        </Tasks>
        <Lang>EN</Lang>
        <TrayGroup $pad={5} $gap={7}><MicIcon /><MicWindowIcon /></TrayGroup>
        <TrayGroup $pad={6}><QuestionIcon page /></TrayGroup>
        <TrayGroup $pad={7}>
          <svg width="9" height="18" shapeRendering="crispEdges"><path d="M2.500 4V1.500h6v4H6M.5 3.500h5v4h-5z" fill="none" stroke="#000" /><path d="M1 14h6l-3 3z" /></svg>
        </TrayGroup>
        <TrayGroup $pad={3} $gap={3}>
          <JavaIcon /><NetIcon /><ShieldIcon /><BirdIcon /><NetIcon /><SpeakerIcon /><BoxIcon />
          <Clock>10:01 AM</Clock>
        </TrayGroup>
      </TaskBar>
    </Desktop>
  );
}
